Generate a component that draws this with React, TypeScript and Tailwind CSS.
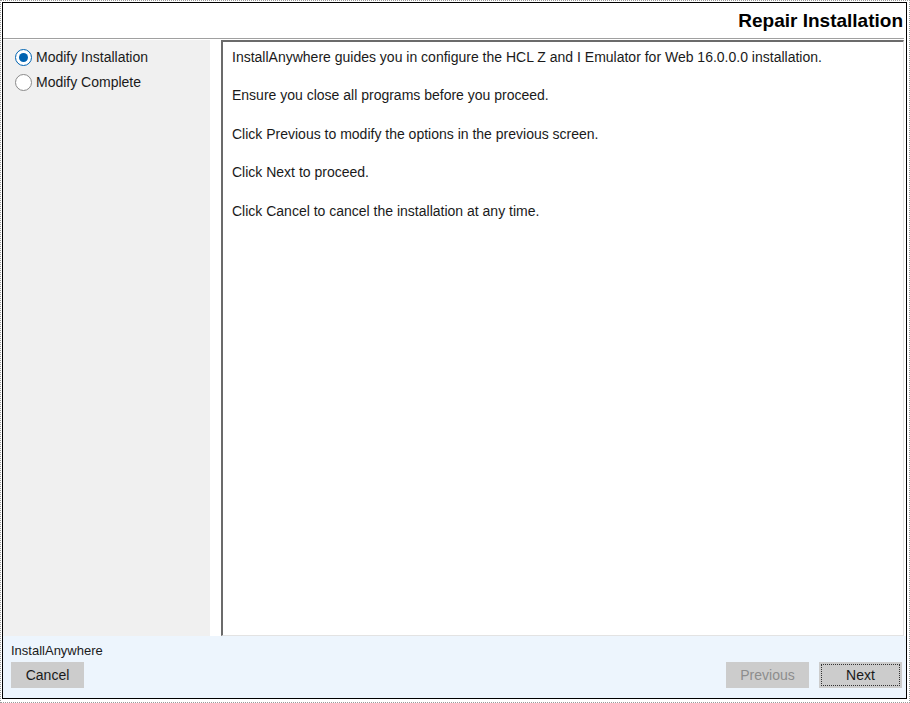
import React from "react";

function Radio({ checked }: { checked: boolean }) {
  return checked ? (
    <span className="w-[17px] h-[17px] rounded-full border-[1.5px] border-[#0063b1] bg-white flex items-center justify-center shrink-0">
      <span className="w-[9px] h-[9px] rounded-full bg-[#0063b1]" />
    </span>
  ) : (
    <span className="w-[17px] h-[17px] rounded-full border-[1.5px] border-[#8a8a8a] bg-white shrink-0" />
  );
}

export default function App() {
  const lines = [
    "InstallAnywhere guides you in configure the HCL Z and I Emulator for Web 16.0.0.0 installation.",
    "Ensure you close all programs before you proceed.",
    "Click Previous to modify the options in the previous screen.",
    "Click Next to proceed.",
    "Click Cancel to cancel the installation at any time.",
  ];
  return (
    <div
      className="w-[910px] h-[703px] border border-dotted border-[#9a9a9a] bg-white overflow-hidden"
      style={{ fontFamily: '"Liberation Sans", Arial, sans-serif' }}
    >
      <div className="mt-px ml-px mr-[2px] mb-[2px] h-[697px] border border-black flex flex-col bg-white">
        <div className="h-[36px] shrink-0 flex items-center justify-end pr-[1px] pt-[2px] border-b border-[#a0a0a0] mr-[2px]">
          <span className="text-[19px] font-bold text-black">Repair Installation</span>
        </div>
        <div className="flex-1 flex pt-[1px] min-h-0">
          <div className="w-[207px] bg-[#f0f0f0] pt-[7px] pl-[12px] flex flex-col gap-[4px]">
            <label className="flex items-center gap-[4px] text-[14px] text-[#1a1a1a]">
              <Radio checked />
              <span>Modify Installation</span>
            </label>
            <label className="flex items-center gap-[4px] text-[14px] text-[#1a1a1a]">
              <Radio checked={false} />
              <span>Modify Complete</span>
            </label>
          </div>
          <div className="ml-[11px] mr-[2px] flex-1 bg-white border-l-2 border-t-2 border-l-[#6b6b6b] border-t-[#6b6b6b] border-r border-b border-r-[#e3e3e3] border-b-[#e3e3e3] pl-[9px] pt-[7px] flex flex-col gap-[21.4px]">
            {lines.map((l) => (
              <p key={l} className="text-[14px] leading-[17px] text-[#1a1a1a]">
                {l}
              </p>
            ))}
          </div>
        </div>
        <div className="h-[62px] shrink-0 bg-[#edf5fd] flex flex-col pl-[8px] pr-[4px] pt-[7px]">
          <div className="text-[13px] leading-[15px] text-[#1a1a1a]">InstallAnywhere</div>
          <div className="flex items-center mt-[4px]">
            <button className="w-[73px] h-[26px] bg-[#cccccc] text-[14px] text-[#1a1a1a]">Cancel</button>
            <div className="flex-1" />
            <button className="w-[83px] h-[26px] bg-[#cccccc] text-[14px] text-[#8d8d8d]">Previous</button>
            <button className="ml-[10px] w-[83px] h-[26px] bg-[#cccccc] text-[14px] text-[#1a1a1a] flex items-center justify-center">
              <span className="w-[79px] h-[22px] border border-dotted border-[#333] flex items-center justify-center">Next</span>
            </button>
          </div>
        </div>
      </div>
    </div>
  );
}
